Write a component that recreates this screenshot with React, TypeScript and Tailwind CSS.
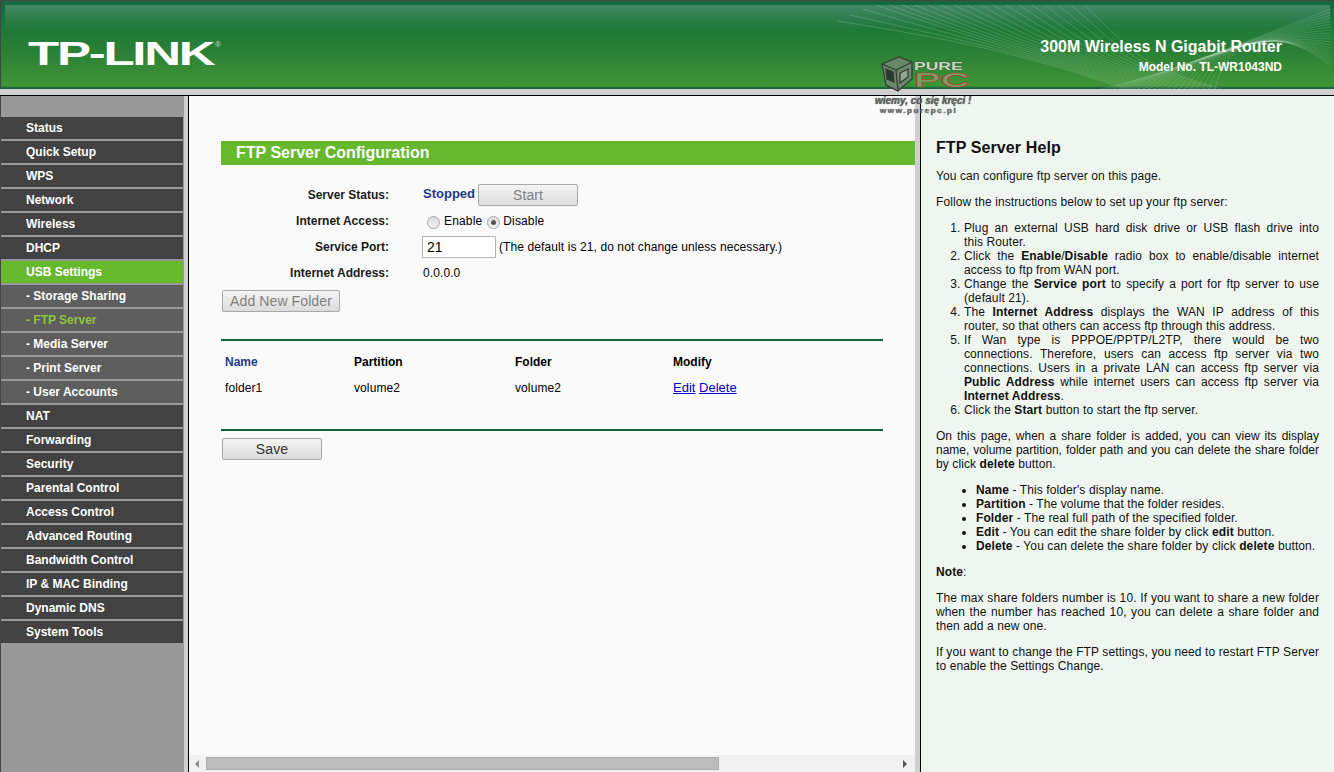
import React from "react";

const menu = [
  { label: "Status" },
  { label: "Quick Setup" },
  { label: "WPS" },
  { label: "Network" },
  { label: "Wireless" },
  { label: "DHCP" },
  { label: "USB Settings", active: true },
  { label: "- Storage Sharing", sub: true },
  { label: "- FTP Server", sub: true, current: true },
  { label: "- Media Server", sub: true },
  { label: "- Print Server", sub: true },
  { label: "- User Accounts", sub: true },
  { label: "NAT" },
  { label: "Forwarding" },
  { label: "Security" },
  { label: "Parental Control" },
  { label: "Access Control" },
  { label: "Advanced Routing" },
  { label: "Bandwidth Control" },
  { label: "IP & MAC Binding" },
  { label: "Dynamic DNS" },
  { label: "System Tools" },
];

const Waves = () => {
  const lines = Array.from({ length: 20 }, (_, i) => i);
  return (
    <svg className="absolute left-0 top-0" width="1334" height="88" viewBox="0 0 1334 88" fill="none">
      {lines.map((i) => (
        <path
          key={i}
          d={`M${836 + i * 13} ${i < 3 ? 20 - i * 6 : 4} C ${950 + i * 10} ${38 + i}, ${1020 + i * 6} ${52 + i / 2}, ${1125 + i * 5} 88`}
          stroke="#ffffff"
          strokeOpacity="0.22"
          strokeWidth="0.7"
        />
      ))}
      {lines.map((i) => (
        <path
          key={`r${i}`}
          d={`M${1100 + i * 6} 88 C ${1170 + i * 3} ${72 - i * 2}, ${1240 + i * 2} ${42 - i}, 1330 ${8 + i * 3}`}
          stroke="#ffffff"
          strokeOpacity="0.2"
          strokeWidth="0.7"
        />
      ))}
    </svg>
  );
};

const PurePc = () => (
  <div className="absolute left-[873px] top-[56px] w-[104px]">
    <div className="flex items-start">
      <svg width="32" height="36" viewBox="0 0 32 36" fill="none" stroke="#3a3a3a" strokeWidth="1.3" className="ml-[8px]">
        <path d="M1 8 L18 1 L31 6 L31 23 L17 35 L5 29 Z" fill="#6f8a70" fillOpacity="0.85" />
        <path d="M1 8 L15 14 L31 6 M15 14 L17 35" />
        <path d="M5 13 L12 16 L13 26 L6 23 Z" fill="#2b3a2e" />
        <path d="M19 17 L27 13 L27 21 L19 27 Z" fill="#8fa58f" />
      </svg>
      <div className="ml-[1px] mt-[6px] flex flex-col">
        <span className="origin-left scale-x-[1.75] text-[10px] font-bold leading-[10px] text-[#c9d6c6] [text-shadow:0_0_1px_#333]">PURE</span>
        <span className="origin-left scale-x-[2] text-[20px] font-bold leading-[16px] text-[#7d9a66] [-webkit-text-stroke:0.7px_#a5482d]">PC</span>
      </div>
    </div>
    <div className="mt-[3px] whitespace-nowrap pl-[2px] text-[10px] font-bold italic leading-[11px] text-[#666] [text-shadow:0_0_1px_#333]">wiemy, co się kręci !</div>
    <div className="ml-[7px] mt-px whitespace-nowrap text-[8px] font-bold leading-[8px] tracking-[1.6px] text-[#777] [text-shadow:0_0_1px_#333]">www.purepc.pl</div>
  </div>
);

const Btn = ({ children, className }: { children: React.ReactNode; className: string }) => (
  <button
    className={`h-[22px] rounded-[2px] border border-[#a8a8a8] bg-[linear-gradient(#f4f4f4,#dcdcdc)] text-[14px] leading-none tracking-[0.1px] ${className}`}
  >
    {children}
  </button>
);

const Radio = ({ checked }: { checked?: boolean }) => (
  <span className="mt-[2px] flex h-[13px] w-[13px] items-center justify-center rounded-full border border-[#a6a6a6] bg-[linear-gradient(#dcdcdc,#f2f2f2)]">
    {checked && <span className="h-[5px] w-[5px] rounded-full bg-[#555]" />}
  </span>
);

const Row = ({ label, className, children }: { label: string; className: string; children: React.ReactNode }) => (
  <div className={`flex items-center ${className}`}>
    <div className="w-[168px] text-right font-bold text-[#1a1a1a]">{label}</div>
    <div className="ml-[34px] flex items-center">{children}</div>
  </div>
);

export default function App() {
  return (
    <div className="flex h-[772px] w-[1334px] flex-col overflow-hidden bg-[#999999] font-[family-name:Liberation_Sans,Arial,sans-serif] text-[12px] text-black">
      <header className="relative h-[89px] shrink-0 overflow-hidden border-l border-t border-[#444] bg-[linear-gradient(#14693f_0px,#14693f_4px,#1f7a39_28px,#2a8036_50px,#3f9535_85px,#14603a_87px)]">
        <div className="absolute left-[4px] right-[4px] top-[4px] h-[24px] bg-[linear-gradient(#ffffff33,#ffffff00)]" />
        <Waves />
        <div className="absolute left-[27px] top-[33px] origin-left scale-x-[1.5] whitespace-nowrap text-[34px] font-bold leading-[38px] tracking-[-1.5px] text-white">
          TP-LINK
        </div>
        <span className="absolute left-[214px] top-[40px] text-[8px] leading-none text-[#cfe3cf]">®</span>
        <div className="relative mr-[52px] mt-[37px] flex flex-col items-end font-bold text-white">
          <div className="text-[16px] leading-[18px]">300M Wireless N Gigabit Router</div>
          <div className="mt-[4px] text-[12px] leading-[14px]">Model No. TL-WR1043ND</div>
        </div>
      </header>

      <div className="h-[6px] shrink-0 bg-[#cfcfcf]" />

      <div className="flex min-h-0 flex-1 border-t border-black">
        {/* left menu */}
        <nav className="flex w-[184px] shrink-0 flex-col gap-[2px] border-l border-[#444] pt-[21px]">
          {menu.map((m) => (
            <div
              key={m.label}
              className={`flex h-[22px] w-[182px] items-center pl-[25px] font-bold ${
                m.active ? "bg-[#66b82c]" : m.sub ? "bg-[#5e5e5e]" : "bg-[#424242]"
              } ${m.current ? "text-[#8cc63f]" : "text-white"}`}
            >
              {m.label}
            </div>
          ))}
        </nav>
        <div className="w-[4px] shrink-0 bg-[#cfcfcf]" />

        {/* main */}
        <main className="flex w-[727px] shrink-0 flex-col border-l border-black bg-[#fafafa]">
          <div className="min-h-0 flex-1 pl-[32px] pt-[45px]">
            <h1 className="flex h-[24px] items-center bg-[#66b82c] pl-[15px] text-[16px] font-bold text-white">
              FTP Server Configuration
            </h1>
            <div className="mt-[19px] w-[662px]">
              <Row label="Server Status:" className="h-[22px]">
                <span className="-mt-[2px] w-[55px] text-[13px] font-bold text-[#1f3a8a]">Stopped</span>
                <Btn className="w-[100px] text-[#808080]">Start</Btn>
              </Row>
              <Row label="Internet Access:" className="mt-[4px] h-[22px]">
                <span className="ml-[4px]"><Radio /></span>
                <span className="-mt-[1px] ml-[4px] tracking-[0.15px]">Enable</span>
                <span className="ml-[5px]"><Radio checked /></span>
                <span className="-mt-[1px] ml-[3px] tracking-[0.15px]">Disable</span>
              </Row>
              <Row label="Service Port:" className="mt-[4px] h-[22px]">
                <div className="-ml-px flex h-[22px] w-[74px] items-center border border-[#b5b5b5] bg-white pl-[4px] text-[14px]">21</div>
                <span className="ml-[3px] whitespace-nowrap tracking-[0.1px]">(The default is 21, do not change unless necessary.)</span>
              </Row>
              <Row label="Internet Address:" className="mt-[4px] h-[22px]">
                <span className="tracking-[0.1px]">0.0.0.0</span>
              </Row>
              <Btn className="ml-px mt-[6px] block w-[118px] text-[#808080]">Add New Folder</Btn>

              <div className="mt-[27px] border-t-2 border-[#17603f]" />
              <div className="grid grid-cols-[129px_161px_158px_1fr] pl-[4px] pt-[13px] leading-[16px]">
                <div className="font-bold text-[#1f3a8a]">Name</div>
                <div className="font-bold">Partition</div>
                <div className="font-bold">Folder</div>
                <div className="font-bold">Modify</div>
              </div>
              <div className="mt-[10px] grid grid-cols-[129px_161px_158px_1fr] pl-[4px] leading-[16px] tracking-[0.1px]">
                <div>folder1</div>
                <div>volume2</div>
                <div>volume2</div>
                <div className="text-[13px] tracking-normal">
                  <a className="text-[#0000cc] underline">Edit</a> <a className="text-[#0000cc] underline">Delete</a>
                </div>
              </div>
              <div className="mt-[33px] border-t-2 border-[#17603f]" />
              <Btn className="ml-px mt-[7px] block w-[100px] text-[#333]">Save</Btn>
            </div>
          </div>
          {/* horizontal scrollbar */}
          <div className="flex h-[17px] items-center bg-[#f1f1f1] pl-[5px]">
            <svg width="6" height="8" viewBox="0 0 6 8"><path d="M5 0 L1 4 L5 8 Z" fill="#8a8a8a" /></svg>
            <div className="ml-[6px] h-[13px] w-[513px] border border-[#adadad] bg-[#bcbcbc]" />
            <svg width="6" height="8" viewBox="0 0 6 8" className="ml-[183px]"><path d="M1 0 L5 4 L1 8 Z" fill="#555" /></svg>
          </div>
        </main>
        <div className="w-[5px] shrink-0 bg-[#cfcfcf]" />

        {/* help */}
        <aside className="min-w-0 flex-1 border-l border-black bg-[#eff6ef] pl-[15px] pr-[15px] text-[12px] leading-[14px] tracking-[0.1px] text-[#111]">
          <h2 className="mt-[43px] text-[16px] font-bold leading-[18px]">FTP Server Help</h2>
          <p className="mt-[12px]">You can configure ftp server on this page.</p>
          <p className="mt-[12px]">Follow the instructions below to set up your ftp server:</p>
          <ol className="mt-[12px] list-decimal pl-[28px] text-justify">
            <li><span className="block [text-align-last:justify]">Plug an external USB hard disk drive or USB flash drive into</span>this Router.</li>
            <li>Click the <b>Enable</b>/<b>Disable</b> radio box to enable/disable internet access to ftp from WAN port.</li>
            <li>Change the <b>Service port</b> to specify a port for ftp server to use (default 21).</li>
            <li>The <b>Internet Address</b> displays the WAN IP address of this router, so that others can access ftp through this address.</li>
            <li>If Wan type is PPPOE/PPTP/L2TP, there would be two connections. Therefore, users can access ftp server via two connections. Users in a private LAN can access ftp server via <b>Public Address</b> while internet users can access ftp server via <b>Internet Address</b>.</li>
            <li>Click the <b>Start</b> button to start the ftp server.</li>
          </ol>
          <p className="mt-[12px] text-justify">
            <span className="block tracking-normal [text-align-last:justify]">On this page, when a share folder is added, you can view its display name, volume partition, folder path and you can delete the share folder</span>
            by click <b>delete</b> button.
          </p>
          <ul className="mt-[12px] list-disc pl-[40px]">
            <li><b>Name</b> - This folder's display name.</li>
            <li><b>Partition</b> - The volume that the folder resides.</li>
            <li><b>Folder</b> - The real full path of the specified folder.</li>
            <li><b>Edit</b> - You can edit the share folder by click <b>edit</b> button.</li>
            <li><b>Delete</b> - You can delete the share folder by click <b>delete</b> button.</li>
          </ul>
          <p className="mt-[12px]"><b>Note</b>:</p>
          <p className="mt-[12px] text-justify">The max share folders number is 10. If you want to share a new folder when the number has reached 10, you can delete a share folder and then add a new one.</p>
          <p className="mt-[12px] text-justify">
            <span className="block [text-align-last:justify]">If you want to change the FTP settings, you need to restart FTP Server</span>
            to enable the Settings Change.
          </p>
        </aside>
      </div>
      <PurePc />
    </div>
  );
}
